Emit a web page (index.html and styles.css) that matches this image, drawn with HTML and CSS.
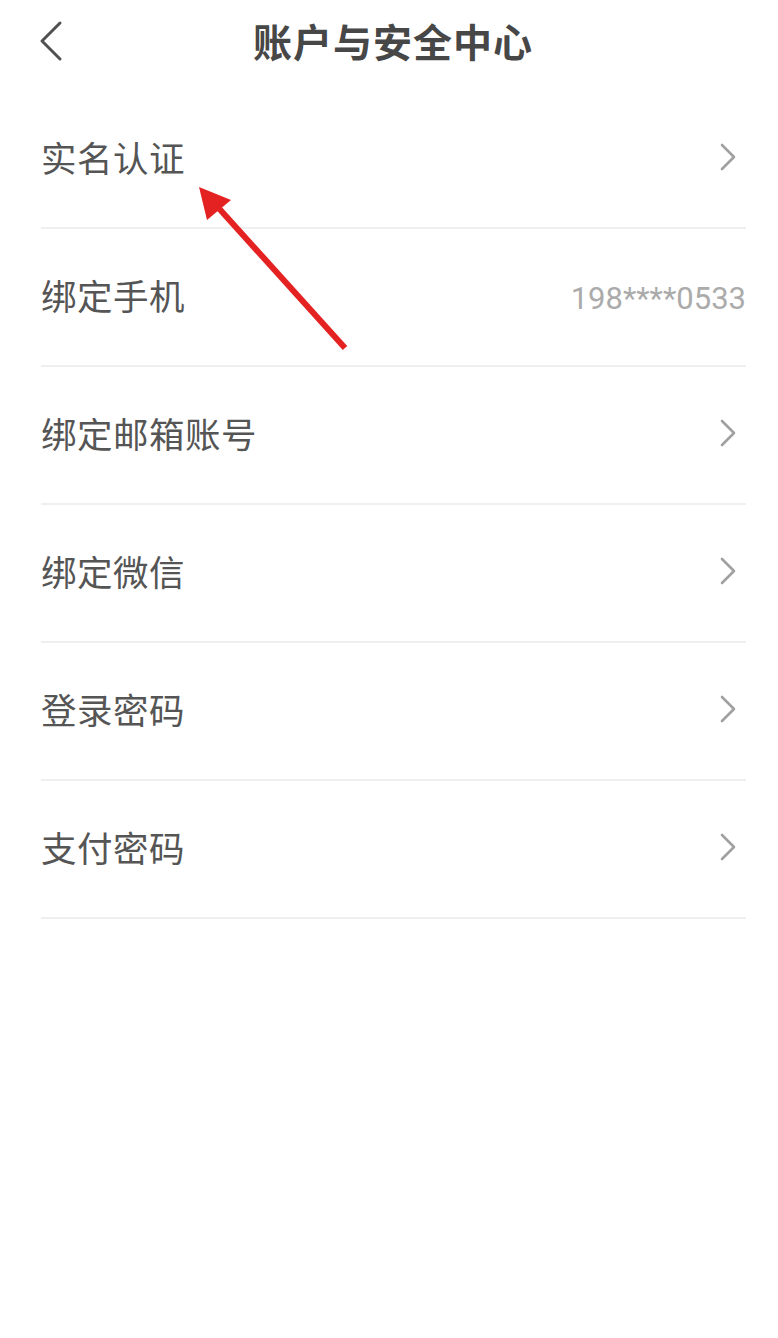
FILE: index.html
```html
<!DOCTYPE html>
<html lang="zh-CN">
<head>
<meta charset="utf-8">
<title>账户与安全中心</title>
<link rel="stylesheet" href="styles.css">
</head>
<body>
<div class="page">
  <header class="topbar">
    <svg class="back" width="30" height="44" viewBox="0 0 30 44"><path d="M21 3 L3 21 L21 39" fill="none" stroke="#505050" stroke-width="3" stroke-linecap="round" stroke-linejoin="round"/></svg>
    <h1 class="title">账户与安全中心</h1>
  </header>
  <ul class="list">
    <li class="row"><span class="label">实名认证</span><svg class="chev" width="20" height="30" viewBox="0 0 20 30"><path d="M4 3 L16 15 L4 27" fill="none" stroke="#a0a0a0" stroke-width="2.6" stroke-linecap="round" stroke-linejoin="round"/></svg></li>
    <li class="row"><span class="label">绑定手机</span><span class="value">198****0533</span></li>
    <li class="row"><span class="label">绑定邮箱账号</span><svg class="chev" width="20" height="30" viewBox="0 0 20 30"><path d="M4 3 L16 15 L4 27" fill="none" stroke="#a0a0a0" stroke-width="2.6" stroke-linecap="round" stroke-linejoin="round"/></svg></li>
    <li class="row"><span class="label">绑定微信</span><svg class="chev" width="20" height="30" viewBox="0 0 20 30"><path d="M4 3 L16 15 L4 27" fill="none" stroke="#a0a0a0" stroke-width="2.6" stroke-linecap="round" stroke-linejoin="round"/></svg></li>
    <li class="row"><span class="label">登录密码</span><svg class="chev" width="20" height="30" viewBox="0 0 20 30"><path d="M4 3 L16 15 L4 27" fill="none" stroke="#a0a0a0" stroke-width="2.6" stroke-linecap="round" stroke-linejoin="round"/></svg></li>
    <li class="row"><span class="label">支付密码</span><svg class="chev" width="20" height="30" viewBox="0 0 20 30"><path d="M4 3 L16 15 L4 27" fill="none" stroke="#a0a0a0" stroke-width="2.6" stroke-linecap="round" stroke-linejoin="round"/></svg></li>
  </ul>
  <svg class="annot" width="778" height="1338" viewBox="0 0 778 1338">
    <line x1="345" y1="348" x2="215" y2="204" stroke="#e52222" stroke-width="6"/>
    <polygon points="199,187 231,200 207,220" fill="#e52222"/>
  </svg>
</div>
</body>
</html>
```
FILE: styles.css
```css
html, body {
  margin: 0;
  padding: 0;
  background: #ffffff;
}
.page {
  position: relative;
  width: 778px;
  height: 1338px;
  overflow: hidden;
  font-family: "Noto Sans CJK SC", "Noto Sans", sans-serif;
}
.topbar {
  position: relative;
  height: 91px;
  display: flex;
  align-items: center;
  justify-content: center;
}
.back {
  position: absolute;
  left: 39px;
  top: 20px;
}
.title {
  margin: 0;
  font-size: 39px;
  font-weight: 700;
  color: #474747;
  letter-spacing: 1px;
  line-height: 1;
  padding-left: 8px;
  margin-top: -10px;
}
.list {
  list-style: none;
  margin: 0;
  padding: 0 32px 0 41px;
}
.row {
  height: 136px;
  border-bottom: 2px solid #efefef;
  display: flex;
  align-items: center;
  justify-content: space-between;
}
.label {
  font-size: 35.5px;
  color: #555555;
  line-height: 1;
  margin-top: -4px;
  letter-spacing: 0.5px;
}
.value {
  font-family: Roboto, "Noto Sans", sans-serif;
  font-size: 31px;
  color: #ababab;
  line-height: 1;
  margin-right: 0;
  margin-top: 2px;
}
.chev {
  margin-right: 8px;
  margin-top: -4px;
}
.annot {
  position: absolute;
  left: 0;
  top: 0;
  pointer-events: none;
}
```
